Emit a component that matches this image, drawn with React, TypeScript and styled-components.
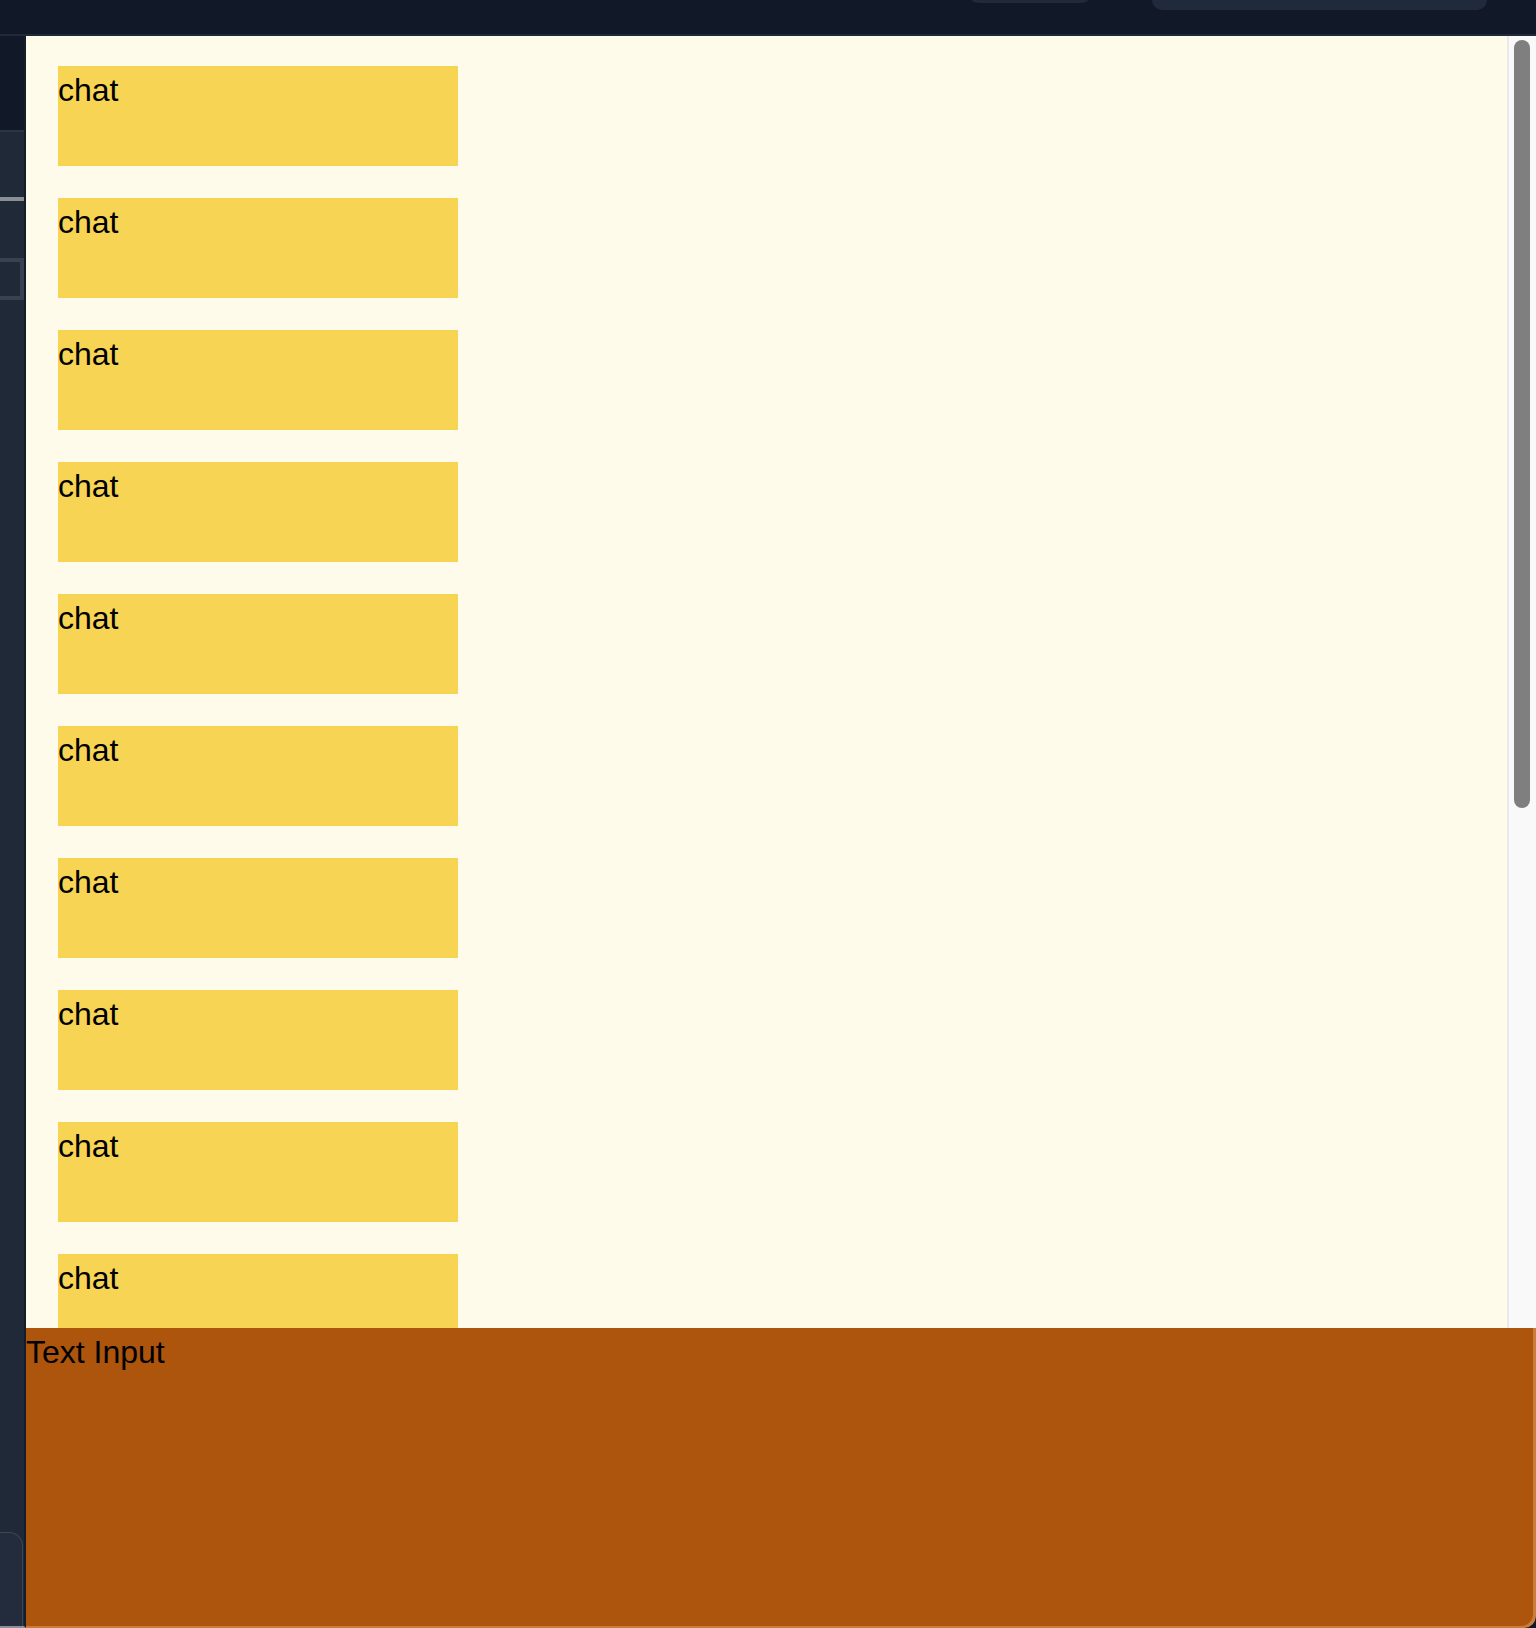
import styled, { createGlobalStyle } from "styled-components";

const GlobalStyle = createGlobalStyle`
  html, body {
    margin: 0;
    padding: 0;
  }
  body {
    font-family: "Liberation Sans", Arial, sans-serif;
    font-size: 32px;
    line-height: 1.5;
    color: #000;
    background: #111827;
  }
  * {
    box-sizing: border-box;
  }
`;

const Window = styled.div`
  display: flex;
  flex-direction: column;
  width: 1536px;
  height: 1628px;
  overflow: hidden;
  border-bottom-right-radius: 12px;
  background: #111827;
`;

const TopBar = styled.header`
  display: flex;
  align-items: flex-start;
  gap: 64px;
  height: 36px;
  padding-left: 972px;
  background: #111827;
  border-bottom: 2px solid #1f2937;
  flex-shrink: 0;
`;

const TabStub = styled.div`
  width: 116px;
  height: 3px;
  background: #212a3b;
  border-radius: 0 0 8px 8px / 0 0 3px 3px;
`;

const SearchStub = styled.div`
  width: 335px;
  height: 10px;
  background: #212a3b;
  border-radius: 0 0 10px 10px;
`;

const Body = styled.div`
  display: flex;
  flex: 1;
  min-height: 0;
`;

const Sidebar = styled.aside`
  display: flex;
  flex-direction: column;
  width: 26px;
  flex-shrink: 0;
  background: #1f2937;
  border-right: 2px solid #151c2a;
  border-bottom: 2px solid #8a8f98;
`;

const SidebarHead = styled.div`
  height: 96px;
  background: #111827;
  border-bottom: 2px solid #2a3442;
  flex-shrink: 0;
`;

const SidebarRule = styled.div`
  height: 4px;
  margin-top: 65px;
  background: #8b8e94;
`;

const SidebarField = styled.div`
  height: 42px;
  margin-top: 57px;
  border: 4px solid #374151;
  border-left: none;
  background: #1f2937;
`;

const SidebarCard = styled.div`
  margin-top: auto;
  height: 94px;
  margin-right: 1px;
  background: #232c3d;
  border: 1px solid #3a4556;
  border-left: none;
  border-bottom: none;
  border-top-right-radius: 14px;
`;

const Main = styled.main`
  display: flex;
  flex-direction: column;
  flex: 1;
  min-width: 0;
`;

const ChatPane = styled.section`
  display: flex;
  flex: 1;
  min-height: 0;
  background: #fffbea;
`;

const ChatList = styled.div`
  display: flex;
  flex-direction: column;
  gap: 32px;
  flex: 1;
  min-width: 0;
  overflow: hidden;
  padding: 30px 32px 0;
`;

const ScrollTrack = styled.div`
  width: 29px;
  flex-shrink: 0;
  padding: 4px 0 0 5px;
  background: #f9f9f9;
  border-left: 2px solid #e9e9e9;
`;

const ScrollThumb = styled.div<{ $size: number }>`
  width: 16px;
  height: ${(p) => p.$size}px;
  border-radius: 8px;
  background: #7f7f7f;
`;

const ChatBubble = styled.div`
  flex-shrink: 0;
  width: 400px;
  height: 100px;
  background: #f7d454;
`;

const InputArea = styled.div`
  height: 300px;
  flex-shrink: 0;
  background: #ad540d;
  border-bottom-right-radius: 12px;
  box-shadow: inset -3px -2px 0 rgba(255, 200, 150, 0.35);
`;

const chats = Array.from({ length: 10 }, (_, i) => ({ id: i, text: "chat" }));

export default function App() {
  return (
    <>
      <GlobalStyle />
      <Window>
        <TopBar>
          <TabStub />
          <SearchStub />
        </TopBar>
        <Body>
          <Sidebar>
            <SidebarHead />
            <SidebarRule />
            <SidebarField />
            <SidebarCard />
          </Sidebar>
          <Main>
            <ChatPane>
              <ChatList>
                {chats.map((c) => (
                  <ChatBubble key={c.id}>{c.text}</ChatBubble>
                ))}
              </ChatList>
              <ScrollTrack>
                <ScrollThumb $size={768} />
              </ScrollTrack>
            </ChatPane>
            <InputArea>Text Input</InputArea>
          </Main>
        </Body>
      </Window>
    </>
  );
}
